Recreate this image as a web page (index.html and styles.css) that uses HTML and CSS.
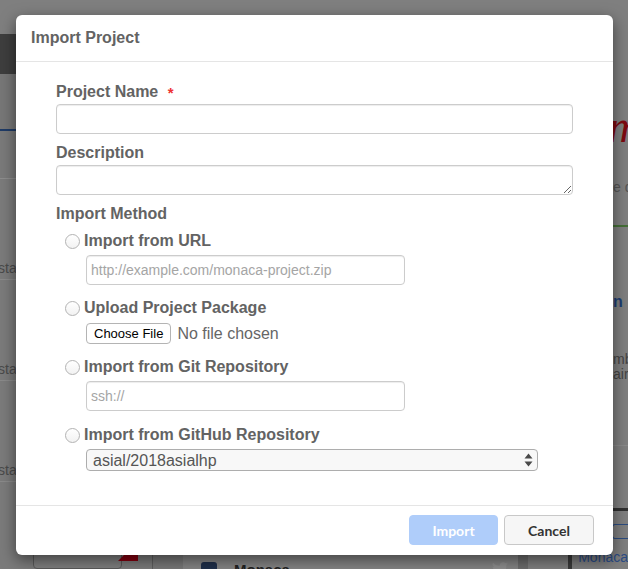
FILE: index.html
```html
<!DOCTYPE html>
<html lang="en">
<head>
<meta charset="utf-8">
<title>Import Project</title>
<link rel="stylesheet" href="styles.css">
</head>
<body>
<div class="page">
  <aside class="nav">
    <div class="nav-top"></div>
    <div class="nav-dark"></div>
    <div class="nav-tabs"></div>
    <div class="nav-head"></div>
    <div class="nav-row"><span>status</span></div>
    <div class="nav-row"><span>status</span></div>
    <div class="nav-row"><span>status</span></div>
    <div class="nav-foot"><span class="nav-btn"></span><span class="ribbon"></span></div>
  </aside>
  <main class="main">
    <div class="main-bottom">
      <div class="card">
        <span class="card-icon"></span>
        <b class="card-title">Monaca</b>
        <svg class="bird" width="16" height="14" viewBox="0 0 16 14"><path d="M16 1.6c-.6.3-1.2.4-1.9.5.7-.4 1.2-1 1.4-1.8-.6.4-1.3.6-2.1.8A3.3 3.3 0 0 0 7.8 4.1 9.3 9.3 0 0 1 1.1.7a3.3 3.3 0 0 0 1 4.4c-.5 0-1-.2-1.5-.4 0 1.6 1.1 2.9 2.6 3.2-.5.1-1 .2-1.5.1.4 1.3 1.6 2.3 3.1 2.3A6.6 6.6 0 0 1 0 11.6 9.3 9.3 0 0 0 14.4 3.3V2.9c.6-.4 1.2-.9 1.6-1.3z" fill="#8e8e8e"/></svg>
      </div>
      <div class="strip"></div>
    </div>
  </main>
  <aside class="aside">
    <div class="as-logo">m</div>
    <div class="as-text">e d</div>
    <div class="as-green"></div>
    <div class="as-link">n</div>
    <div class="as-p">mb<br>air</div>
    <div class="as-line"></div>
    <div class="as-dark"></div>
    <div class="as-box"></div>
    <div class="as-foot"><span class="as-img"></span><span class="as-name">Monaca</span></div>
  </aside>
</div>

<div class="modal" role="dialog" aria-labelledby="modal-title">
  <div class="modal-header">
    <h4 class="modal-title" id="modal-title">Import Project</h4>
  </div>
  <form class="modal-body">
    <label class="field-label" for="pname">Project Name <span class="req">*</span></label>
    <input class="text-input" id="pname" type="text">

    <label class="field-label gap" for="pdesc">Description</label>
    <textarea class="text-input textarea" id="pdesc"></textarea>

    <div class="field-label gap">Import Method</div>

    <label class="method first"><input type="radio" name="method" class="radio"><span>Import from URL</span></label>
    <input class="text-input sub" type="text" placeholder="http://example.com/monaca-project.zip">

    <label class="method"><input type="radio" name="method" class="radio"><span>Upload Project Package</span></label>
    <div class="file-row"><button type="button" class="file-btn">Choose File</button><span class="file-name">No file chosen</span></div>

    <label class="method"><input type="radio" name="method" class="radio"><span>Import from Git Repository</span></label>
    <input class="text-input sub" type="text" placeholder="ssh://">

    <label class="method last"><input type="radio" name="method" class="radio"><span>Import from GitHub Repository</span></label>
    <div class="select-wrap">
      <select class="repo-select"><option>asial/2018asialhp</option></select>
      <svg class="select-arrows" width="9" height="14" viewBox="0 0 9 14"><path d="M4.5 0.5 L8.5 5.5 L0.5 5.5 Z M0.5 8.5 L8.5 8.5 L4.5 13.5 Z" fill="#4a4a4a"/></svg>
    </div>
  </form>
  <div class="modal-footer">
    <button type="button" class="btn btn-primary" disabled>Import</button>
    <button type="button" class="btn btn-default">Cancel</button>
  </div>
</div>
</body>
</html>
```
FILE: styles.css
```css
* { box-sizing: border-box; }
html, body { margin: 0; padding: 0; }
body {
  width: 628px;
  height: 569px;
  overflow: hidden;
  position: relative;
  background: #7f7f7f;
  font-family: "Liberation Sans", Arial, sans-serif;
}

/* ---------- dimmed backdrop page ---------- */
.page {
  display: grid;
  grid-template-columns: 152px 376px 1fr;
  height: 569px;
}
.nav {
  display: flex;
  flex-direction: column;
  background: #7b7b7b;
  overflow: hidden;
}
.nav-top { height: 35px; background: #7f7f7f; }
.nav-dark { height: 41px; background: #3e3e3e; }
.nav-tabs { height: 59px; background: #777; border-bottom: 2px solid #1f3b66; }
.nav-head { height: 49px; background: #7a7a7a; border-bottom: 1px solid #8d8d8d; }
.nav-row {
  height: 104px;
  border-bottom: 1px solid #8a8a8a;
  display: flex;
  align-items: flex-end;
  padding-bottom: 3px;
  font-size: 14px;
  line-height: 16px;
  color: #4a4a4a;
}
.nav-row span { margin-left: -2px; }
.nav-foot {
  display: flex;
  align-items: flex-start;
  padding-left: 33px;
  margin-top: 57px;
}
.nav-btn {
  width: 89px;
  height: 30px;
  border: 1px solid #5a5a5a;
  border-radius: 4px;
  background: #7f7f7f;
}
.ribbon {
  width: 0;
  height: 0;
  border-left: 20px solid transparent;
  border-bottom: 20px solid #86000f;
  margin: 2px 0 0 -4px;
}

.main {
  display: flex;
  flex-direction: column;
  justify-content: flex-end;
}
.main-bottom {
  display: flex;
  height: 60px;
  border-left: 1px solid #5e5e5e;
  padding-left: 30px;
  background: #787878;
}
.card {
  flex: 1;
  background: #848484;
  display: flex;
  align-items: flex-start;
  padding: 53px 10px 0 18px;
  gap: 17px;
  overflow: hidden;
}
.card-icon {
  width: 16px;
  height: 16px;
  border-radius: 3px;
  background: #1f2f4a;
  flex: none;
}
.card-title { font-size: 15px; line-height: 16px; color: #222; }
.bird { margin-left: auto; }
.strip { width: 10px; background: #6c6c6c; }

.aside {
  display: flex;
  flex-direction: column;
  background: #7f7f7f;
  overflow: hidden;
  white-space: nowrap;
}
.as-logo {
  margin-top: 103px;
  height: 48px;
  padding-left: 80px;
  font: italic 46px/48px "Liberation Serif", serif;
  color: #7d0a10;
}
.as-text { margin-top: 29px; padding-left: 85px; font-size: 14px; line-height: 14px; color: #555; }
.as-green { margin: 31px 0 0 80px; height: 2px; background: #456f37; }
.as-link { margin-top: 67px; padding-left: 85px; font-size: 16px; line-height: 16px; font-weight: bold; color: #1d3d72; }
.as-p { margin-top: 42px; padding-left: 85px; font-size: 14px; line-height: 15px; color: #444; }
.as-line { margin-top: 63px; height: 1px; background: #8a8a8a; }
.as-dark { margin-top: 62px; height: 4px; background: #303030; }
.as-box {
  margin: 13px 0 0 84px;
  height: 17px;
  border: 1px solid #2c4c80;
  border-right: none;
  border-radius: 3px 0 0 3px;
}
.as-foot { margin-top: 10px; padding-left: 40px; display: flex; gap: 6px; }
.as-img { width: 7px; height: 20px; background: #3a3a3a; }
.as-name { font-size: 14px; line-height: 16px; color: #2b4c86; }

/* ---------- modal ---------- */
.modal {
  position: absolute;
  left: 16px;
  top: 15px;
  width: 597px;
  height: 540px;
  background: #fff;
  border-radius: 6px;
  box-shadow: 0 5px 15px rgba(0, 0, 0, .5);
  display: flex;
  flex-direction: column;
}
.modal-header {
  height: 47px;
  border-bottom: 1px solid #e5e5e5;
  padding: 0 15px;
  display: flex;
  align-items: center;
}
.modal-title {
  margin: 0;
  font-size: 16px;
  line-height: 22px;
  font-weight: bold;
  color: #636363;
}
.modal-body {
  flex: 1;
  margin: 0;
  padding: 19px 40px 0;
  display: flex;
  flex-direction: column;
  align-items: flex-start;
}
.field-label {
  display: block;
  font-size: 16px;
  line-height: 22px;
  font-weight: bold;
  color: #636363;
  margin-bottom: 1px;
}
.gap { margin-top: 8px; }
.req {
  color: #ee3333;
  margin-left: 5px;
  font-size: 15px;
  position: relative;
  top: 1px;
}
.text-input {
  display: block;
  width: 100%;
  height: 30px;
  margin: 0;
  border: 1px solid #ccc;
  border-radius: 4px;
  box-shadow: inset 0 1px 1px rgba(0, 0, 0, .075);
  padding: 0 4px;
  font: 14px "Liberation Sans", Arial, sans-serif;
  color: #555;
  background: #fff;
  outline: none;
}
.text-input::placeholder { color: #a5a5a5; }
.textarea { resize: vertical; padding: 4px; }
.sub { width: 319px; margin: 3px 0 0 30px; }

.method {
  display: flex;
  align-items: center;
  gap: 4px;
  height: 22px;
  margin: 12px 0 0 9px;
  font-size: 16px;
  line-height: 22px;
  font-weight: bold;
  color: #636363;
}
.method.first { margin-top: 4px; }
.method.last { margin-top: 13px; }
.radio {
  appearance: none;
  -webkit-appearance: none;
  flex: none;
  width: 15px;
  height: 15px;
  margin: 0;
  border: 1px solid #b3b3b3;
  border-radius: 50%;
  background: linear-gradient(#fff, #f2f2f2);
}

.file-row {
  display: flex;
  align-items: center;
  gap: 6px;
  height: 21px;
  margin: 4px 0 0 30px;
}
.file-btn {
  height: 21px;
  margin: 0;
  padding: 0 7px;
  border: 1px solid #b4b4b4;
  border-radius: 4px;
  background: #fff;
  font: 13px "Liberation Sans", Arial, sans-serif;
  color: #000;
}
.file-name { font-size: 16px; line-height: 21px; color: #666; }

.select-wrap {
  position: relative;
  width: 452px;
  margin: 3px 0 0 30px;
}
.repo-select {
  appearance: none;
  -webkit-appearance: none;
  display: block;
  width: 100%;
  height: 22px;
  margin: 0;
  border: 1px solid #adadad;
  border-radius: 4px;
  background: #f8f8f8;
  padding: 0 0 0 6px;
  font: 16px "Liberation Sans", Arial, sans-serif;
  color: #555;
  outline: none;
}
.select-arrows {
  position: absolute;
  right: 5px;
  top: 4px;
  pointer-events: none;
}

.modal-footer {
  border-top: 1px solid #e5e5e5;
  padding: 9px 19px 10px;
  display: flex;
  justify-content: flex-end;
  gap: 6px;
}
.btn {
  height: 30px;
  margin: 0;
  padding: 0;
  border-radius: 4px;
  font: bold 14px Lato, "Liberation Sans", Arial, sans-serif;
}
.btn-primary {
  width: 89px;
  background: #afcdfa;
  border: 1px solid #afcdfa;
  color: #fff;
}
.btn-default {
  width: 90px;
  background: #f6f6f6;
  border: 1px solid #c8c8c8;
  color: #333;
}
```
